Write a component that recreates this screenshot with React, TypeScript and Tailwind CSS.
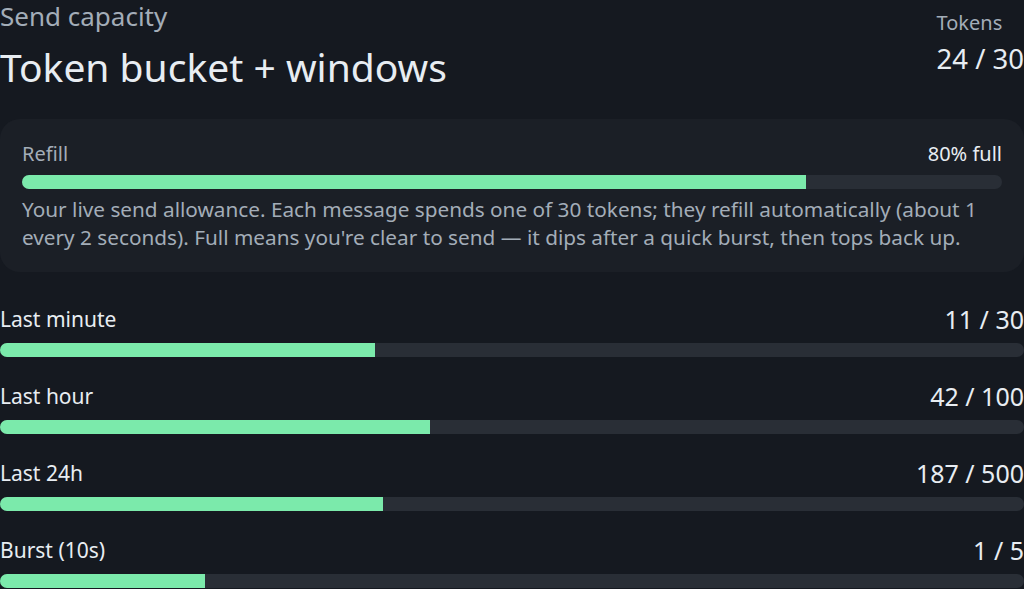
const windows = [
    { label: 'Last minute', used: 11, limit: 30 },
    { label: 'Last hour', used: 42, limit: 100 },
    { label: 'Last 24h', used: 187, limit: 500 },
    { label: 'Burst (10s)', used: 1, limit: 5 },
];

const Bar = ({ pct }: { pct: number }) => (
    <div className="h-3.5 w-full rounded-full bg-[#292e36] overflow-hidden">
        <div className="h-full bg-[#7beaab]" style={{ width: `${pct}%` }}></div>
    </div>
);

const App = () => {
    const tokens = 24;
    const capacity = 30;
    const refill = Math.round((tokens / capacity) * 100);

    return (
        <div
            className="min-h-screen bg-[#151920] text-[#e8edf2]"
            style={{ fontFamily: '"Noto Sans", "Open Sans", sans-serif' }}
        >
            <div className="flex flex-row justify-between items-start">
                <div className="flex flex-col">
                    <p className="text-[26px] leading-[33px] text-[#a3adb8]">
                        Send capacity
                    </p>
                    <h1 className="mt-2 text-[39px] leading-[52px]">
                        Token bucket + windows
                    </h1>
                </div>
                <div className="flex flex-col pt-[9px]">
                    <p className="text-[20px] leading-7 text-[#a3adb8]">
                        Tokens
                    </p>
                    <p className="mt-1 text-[27.5px] leading-9">
                        {tokens} / {capacity}
                    </p>
                </div>
            </div>

            <div className="mt-[26px] rounded-[20px] bg-[#1b1f26] px-[22px] pt-[21px] pb-[21px]">
                <div className="flex flex-row justify-between text-[20px] leading-7">
                    <p className="text-[#a3adb8]">Refill</p>
                    <p>{refill}% full</p>
                </div>
                <div className="mt-[7px]">
                    <Bar pct={refill} />
                </div>
                <p className="mt-1.5 text-[20.75px] leading-7 text-[#a3adb8]">
                    Your live send allowance. Each message spends one of 30
                    tokens; they refill automatically (about 1 every 2
                    seconds). Full means you're clear to send — it dips after
                    a quick burst, then tops back up.
                </p>
            </div>

            <div className="mt-[31px] flex flex-col gap-[23px]">
                {windows.map((w) => (
                    <div key={w.label} className="flex flex-col gap-2">
                        <div className="flex flex-row justify-between">
                            <p className="text-[21px] leading-8">{w.label}</p>
                            <p className="text-[25px] leading-8">
                                {w.used} / {w.limit}
                            </p>
                        </div>
                        <Bar pct={(w.used / w.limit) * 100} />
                    </div>
                ))}
            </div>
        </div>
    );
};

export default App;
